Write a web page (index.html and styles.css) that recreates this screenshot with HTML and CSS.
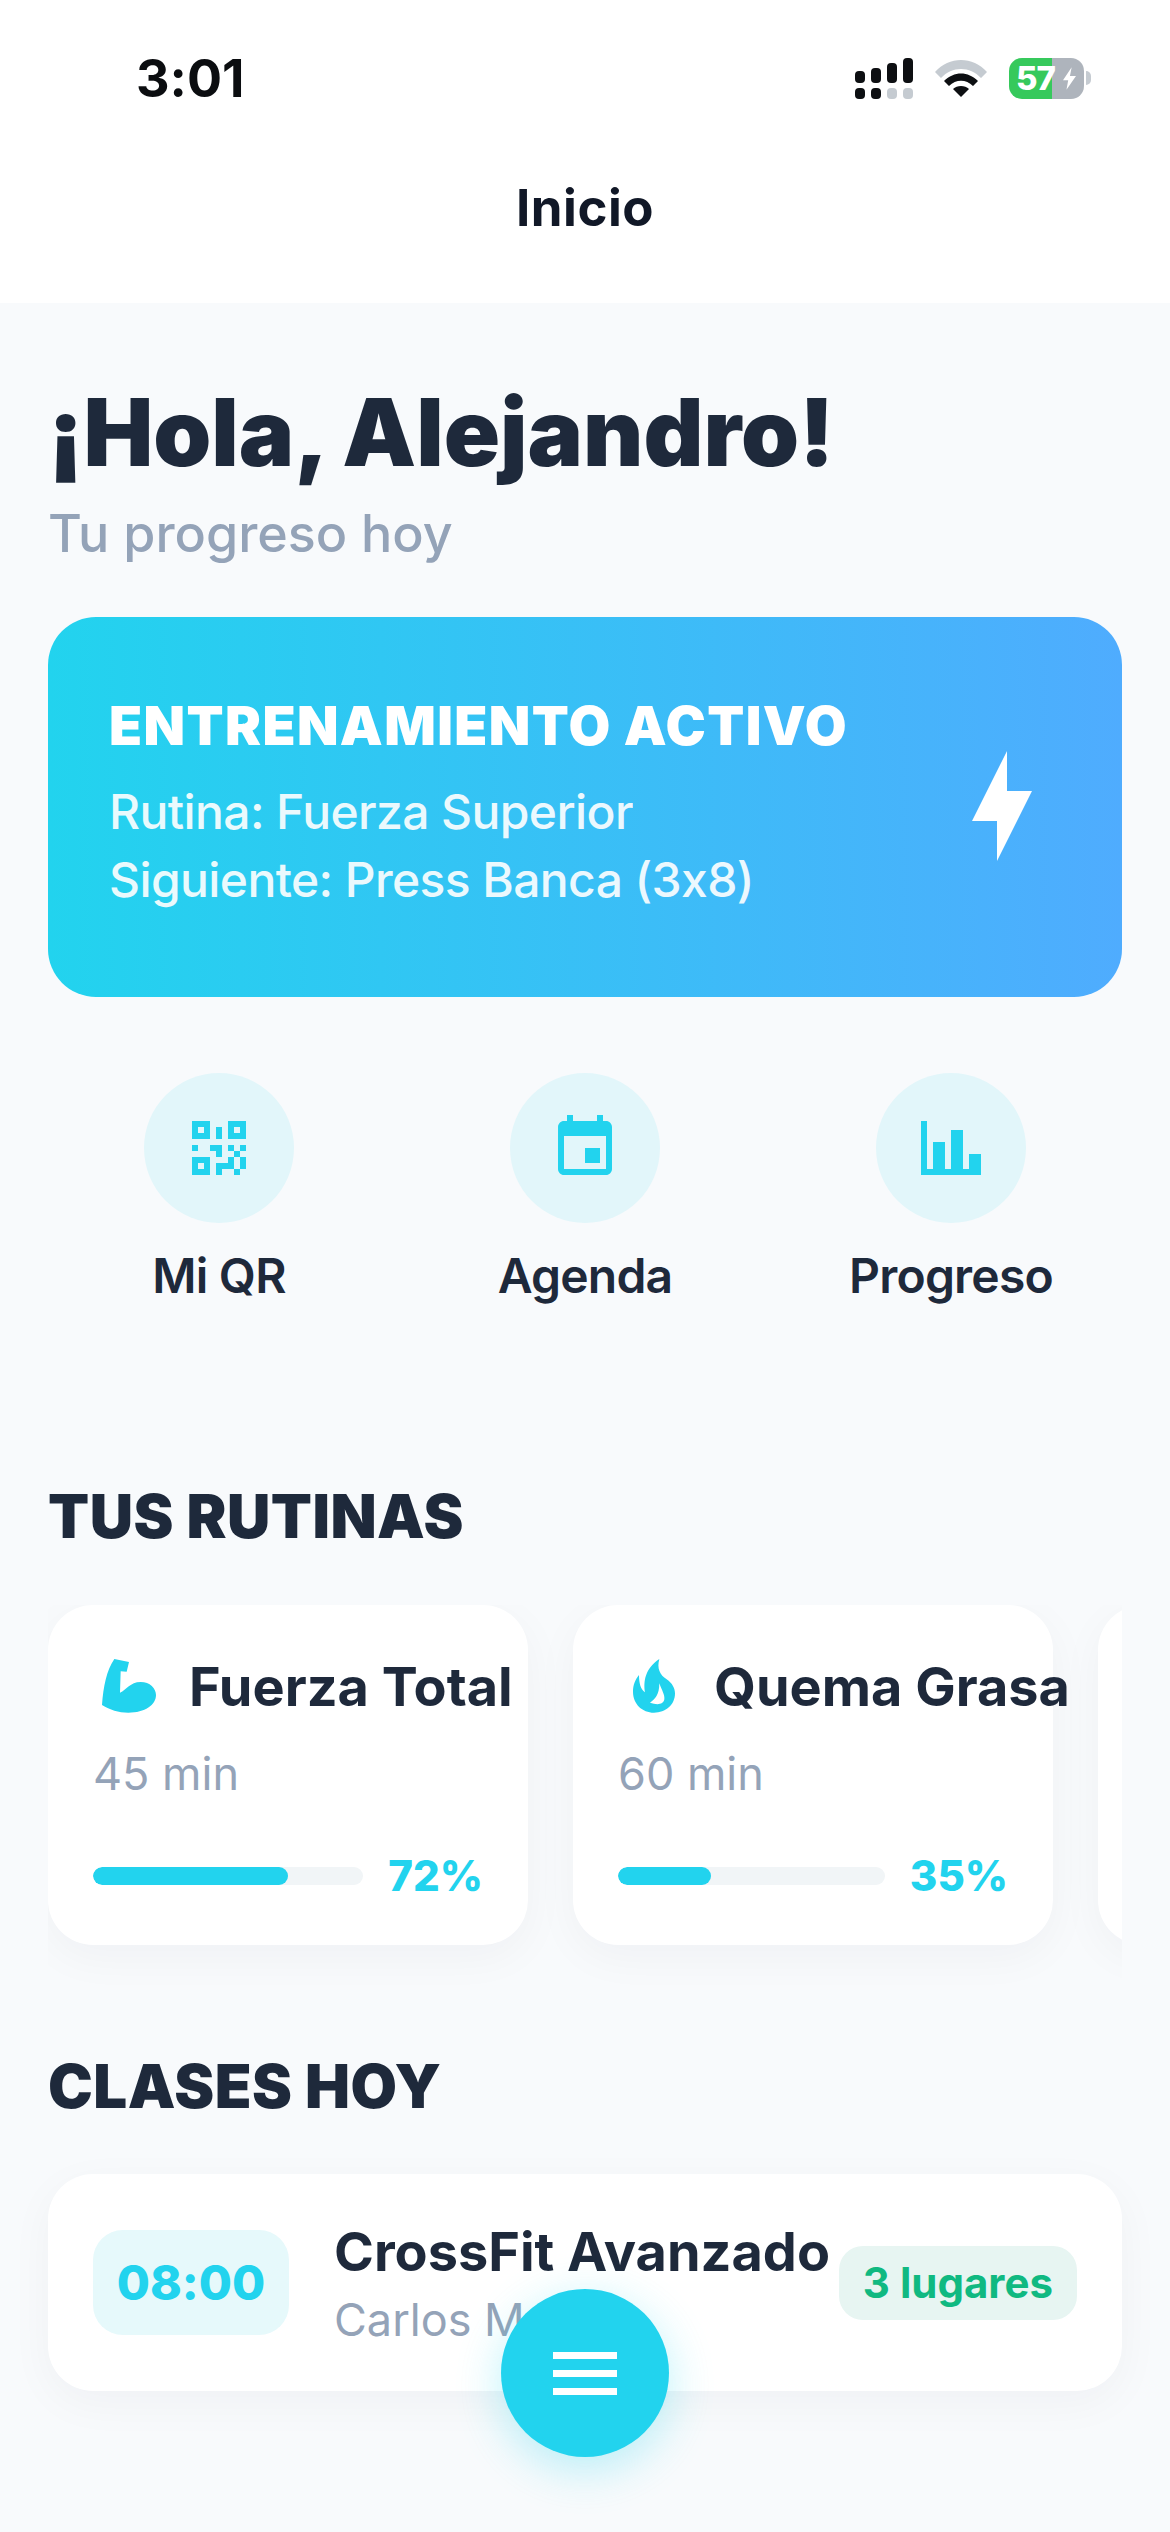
FILE: index.html
```html
<!DOCTYPE html>
<html lang="es">
<head>
    <meta charset="utf-8">
    <title>Inicio</title>
    <meta name="viewport" content="width=device-width, initial-scale=1.0">
    <link rel="stylesheet" href="styles.css">
</head>
<body>
<div class="screen">
    <header class="topbar">
        <div class="status">
            <span class="clock">3:01</span>
            <div class="status-icons">
                <svg class="signal" width="58" height="41" viewBox="0 0 58 41">
                    <rect x="0" y="13" width="10" height="12" rx="4"/>
                    <rect x="16" y="10" width="10" height="15" rx="4"/>
                    <rect x="32" y="5" width="10" height="20" rx="4"/>
                    <rect x="48" y="0" width="10" height="25" rx="4"/>
                    <rect x="0" y="30" width="10" height="11" rx="4"/>
                    <rect x="16" y="30" width="10" height="11" rx="4"/>
                    <rect class="off" x="32" y="30" width="10" height="11" rx="4"/>
                    <rect class="off" x="48" y="30" width="10" height="11" rx="4"/>
                </svg>
                <svg class="wifi" width="52" height="37" viewBox="0 0 52 37">
                    <path class="off" d="M0 12C14 -4 38 -4 52 12L46 18C35 6 17 6 6 18Z"/>
                    <path d="M9 21C19 11 33 11 43 21L38 26C31 19 21 19 14 26Z"/>
                    <path d="M18 29C22 25 30 25 34 29L26 37Z"/>
                </svg>
                <div class="battery">
                    <div class="battery-body">
                        <span>57</span>
                        <svg width="13" height="25" viewBox="0 0 15 26"><path d="M10 0L0 15H6L4 26L15 10H8Z"/></svg>
                    </div>
                    <div class="battery-nub"></div>
                </div>
            </div>
        </div>
        <div class="nav-title">Inicio</div>
    </header>

    <main class="content">
        <h1 class="greeting">¡Hola, Alejandro!</h1>
        <p class="subtitle">Tu progreso hoy</p>

        <section class="hero">
            <div class="hero-text">
                <h2>ENTRENAMIENTO ACTIVO</h2>
                <p>Rutina: Fuerza Superior</p>
                <p>Siguiente: Press Banca (3x8)</p>
            </div>
            <svg class="hero-bolt" width="120" height="120" viewBox="0 0 24 24"><path d="M13 1v8h5l-7 14v-8H6z"/></svg>
        </section>

        <section class="actions">
            <div class="action">
                <div class="action-circle">
                    <svg width="54" height="54" viewBox="0 0 9 9" shape-rendering="crispEdges">
                        <path fill-rule="evenodd" d="M0 0h3v3H0zM1 1v1h1V1zM6 0h3v3H6zM7 1v1h1V1zM0 6h3v3H0zM1 7v1h1V7z"/>
                        <path d="M4 1h1v2H4zM0 4h1v1H0zM3 4h2v2H4V5H3zM6 4h1v1H6zM8 4h1v1H8zM7 5h1v1H7zM6 6h1v1H6zM8 6h1v2H8zM4 7h2V6h1v2H5v1H4zM7 8h1v1H7z"/>
                    </svg>
                </div>
                <span>Mi QR</span>
            </div>
            <div class="action">
                <div class="action-circle">
                    <svg width="72" height="72" viewBox="0 0 24 24">
                        <path d="M17 12h-5v5h5v-5zM16 1v2H8V1H6v2H5c-1.110 0-1.990.9-1.990 2L3 19c0 1.100.89 2 2 2h14c1.100 0 2-.9 2-2V5c0-1.100-.9-2-2-2h-1V1h-2zm3 18H5V8h14v11z"/>
                    </svg>
                </div>
                <span>Agenda</span>
            </div>
            <div class="action">
                <div class="action-circle">
                    <svg width="60" height="54" viewBox="0 0 60 54" shape-rendering="crispEdges">
                        <path d="M0 0h6v48h6V21h12v27h6V9h12v39h6V33h12v21H0z"/>
                    </svg>
                </div>
                <span>Progreso</span>
            </div>
        </section>

        <h2 class="section-title">TUS RUTINAS</h2>
        <div class="routines">
            <article class="routine">
                <div class="routine-head">
                    <svg width="72" height="72" viewBox="39 30 216 216">
                        <path d="M103 57L147 66L140 95L122 94L120 158C140 150 150 126 182 126C210 126 228 145 228 165C228 195 195 218 145 218C115 218 90 210 66 195C70 140 80 90 103 57Z"/>
                    </svg>
                    <h3>Fuerza Total</h3>
                </div>
                <div class="routine-time">45 min</div>
                <div class="routine-progress">
                    <div class="track"><div class="fill" style="width: 72%"></div></div>
                    <span>72%</span>
                </div>
            </article>
            <article class="routine">
                <div class="routine-head">
                    <svg width="72" height="72" viewBox="24 30 216 216">
                        <path fill-rule="evenodd" d="M148 57C140 85 150 105 170 118C187 130 195 145 195 160C195 195 167 218 132 218C97 218 69 192 69 155C69 135 76 118 87 105C87 130 92 148 105 157C100 125 105 85 148 57ZM148 130C155 150 165 165 163 178C160 195 140 195 120 188C135 178 148 165 148 130Z"/>
                    </svg>
                    <h3>Quema Grasa</h3>
                </div>
                <div class="routine-time">60 min</div>
                <div class="routine-progress">
                    <div class="track"><div class="fill" style="width: 35%"></div></div>
                    <span>35%</span>
                </div>
            </article>
            <article class="routine"></article>
        </div>

        <h2 class="section-title section-title-classes">CLASES HOY</h2>
        <article class="class-card">
            <div class="class-time">08:00</div>
            <div class="class-info">
                <h3>CrossFit Avanzado</h3>
                <p>Carlos M.</p>
            </div>
            <div class="class-spots">3 lugares</div>
        </article>
    </main>

    <button class="fab" aria-label="Menú">
        <span></span><span></span><span></span>
    </button>
</div>
</body>
</html>
```

FILE: styles.css
```css
* {
    box-sizing: border-box;
}

html, body {
    margin: 0;
    padding: 0;
}

body {
    font-family: Inter, "Noto Sans", sans-serif;
    font-feature-settings: "calt" 0;
    background: #f8fafc;
    color: #1e293b;
}

.screen {
    position: relative;
    width: 1170px;
    height: 2532px;
    overflow: hidden;
    background: #f8fafc;
}

/* top bar */
.topbar {
    height: 303px;
    background: #ffffff;
}

.status {
    height: 132px;
    padding: 24px 79px 0 136px;
    display: flex;
    justify-content: space-between;
    align-items: center;
}

.clock {
    font-size: 52px;
    font-weight: 700;
    color: #0b0d10;
}

.status-icons {
    display: flex;
    align-items: center;
    gap: 22px;
}

.status-icons svg {
    display: block;
    fill: #0d0f12;
}

.status-icons .off {
    fill: #c5cbd1;
}

.battery {
    display: flex;
    align-items: center;
    gap: 2px;
}

.battery-body {
    width: 75px;
    height: 41px;
    border-radius: 13px;
    background: linear-gradient(90deg, #36c95c 57%, #aeb4bc 57%);
    display: flex;
    align-items: center;
    padding-left: 7px;
    color: #ffffff;
    font-size: 33px;
    font-weight: 800;
    letter-spacing: -1px;
    line-height: 1;
}

.status-icons .battery-body svg {
    fill: #ffffff;
    margin-left: 8px;
}

.battery-nub {
    width: 5px;
    height: 14px;
    border-radius: 0 5px 5px 0;
    background: #c5cbd1;
}

.nav-title {
    height: 171px;
    padding-bottom: 20px;
    display: flex;
    align-items: center;
    justify-content: center;
    font-size: 51px;
    font-weight: 700;
    letter-spacing: 0.5px;
    color: #111827;
}

/* content */
.content {
    padding: 75px 48px 0;
}

.greeting {
    margin: 0;
    font-size: 93px;
    line-height: 108px;
    font-weight: 900;
    white-space: nowrap;
}

.subtitle {
    margin: 17px 0 0;
    font-size: 52px;
    line-height: 61px;
    font-weight: 500;
    color: #94a3b8;
}

.hero {
    margin-top: 53px;
    height: 380px;
    padding: 76px 60px 84px 61px;
    border-radius: 48px;
    background: linear-gradient(90deg, #22d3ee 0%, #4facfe 100%);
    display: flex;
    justify-content: space-between;
    align-items: center;
    color: #ffffff;
}

.hero-text h2 {
    margin: 0 0 20px;
    font-size: 54px;
    line-height: 65px;
    font-weight: 900;
    letter-spacing: 1.4px;
}

.hero-text p {
    margin: 0;
    font-size: 48px;
    line-height: 68px;
    font-weight: 500;
    letter-spacing: -0.6px;
    opacity: 0.9;
}

.hero-bolt {
    fill: #ffffff;
    flex-shrink: 0;
    margin-top: 6px;
}

.actions {
    margin-top: 76px;
    display: grid;
    grid-template-columns: repeat(3, 1fr);
    gap: 24px;
}

.action {
    display: flex;
    flex-direction: column;
    align-items: center;
    gap: 24px;
    font-size: 48px;
    line-height: 58px;
    font-weight: 600;
    letter-spacing: -0.8px;
}

.action-circle {
    width: 150px;
    height: 150px;
    border-radius: 50%;
    background: #e2f6fa;
    display: flex;
    align-items: center;
    justify-content: center;
}

.action-circle svg {
    fill: #22d3ee;
}

.section-title {
    margin: 175px 0 0;
    font-size: 60px;
    line-height: 72px;
    font-weight: 900;
    letter-spacing: 0.5px;
}

.section-title-classes {
    margin-top: 45px;
}

/* routines carousel */
.routines {
    margin-top: 53px;
    padding-bottom: 60px;
    display: flex;
    gap: 45px;
    overflow: hidden;
}

.routine {
    flex: 0 0 480px;
    min-width: 0;
    height: 340px;
    padding: 45px;
    border-radius: 45px;
    background: #ffffff;
    box-shadow: 0 12px 45px rgba(15, 23, 42, 0.04);
}

.routine-head {
    display: flex;
    align-items: center;
    gap: 24px;
    white-space: nowrap;
}

.routine-head svg {
    flex-shrink: 0;
    fill: #22d3ee;
}

.routine-head h3 {
    margin: 0;
    font-size: 54px;
    font-weight: 700;
}

.routine-time {
    margin-top: 27px;
    font-size: 45px;
    line-height: 50px;
    color: #94a3b8;
}

.routine-progress {
    margin-top: 52px;
    display: flex;
    align-items: center;
    gap: 25px;
    font-size: 42px;
    line-height: 50px;
    font-weight: 800;
    color: #22d3ee;
}

.track {
    flex: 1;
    height: 18px;
    border-radius: 9px;
    background: #f1f5f7;
    overflow: hidden;
}

.fill {
    height: 100%;
    border-radius: 9px;
    background: #22d3ee;
}

/* class card */
.class-card {
    margin-top: 52px;
    height: 217px;
    padding: 0 45px;
    border-radius: 45px;
    background: #ffffff;
    box-shadow: 0 12px 45px rgba(15, 23, 42, 0.04);
    display: flex;
    align-items: center;
    gap: 45px;
    white-space: nowrap;
}

.class-time {
    flex-shrink: 0;
    width: 196px;
    height: 105px;
    border-radius: 30px;
    background: #e6f9fb;
    display: flex;
    align-items: center;
    justify-content: center;
    font-size: 48px;
    font-weight: 800;
    color: #22d3ee;
}

.class-info {
    flex: 1;
    min-width: 0;
}

.class-info h3 {
    margin: 0 0 13px;
    font-size: 54px;
    line-height: 61px;
    font-weight: 700;
}

.class-info p {
    margin: 0;
    font-size: 45px;
    line-height: 50px;
    color: #94a3b8;
}

.class-spots {
    flex-shrink: 0;
    padding: 12px 24px;
    border-radius: 24px;
    background: #e7f5f2;
    font-size: 42px;
    line-height: 50px;
    font-weight: 700;
    color: #10b981;
}

/* floating menu button */
.fab {
    position: absolute;
    left: 501px;
    bottom: 75px;
    width: 168px;
    height: 168px;
    padding: 0;
    border: none;
    border-radius: 50%;
    background: #22d3ee;
    box-shadow: 0 12px 45px rgba(34, 211, 238, 0.3);
    display: flex;
    flex-direction: column;
    align-items: center;
    justify-content: center;
    gap: 11px;
}

.fab span {
    width: 64px;
    height: 7px;
    background: #ffffff;
}
```
